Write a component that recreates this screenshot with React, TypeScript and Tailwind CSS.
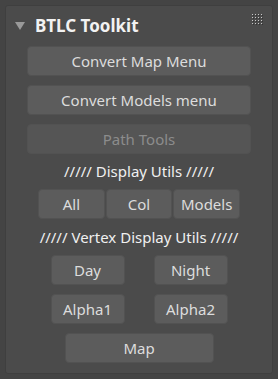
import React from "react";

const font = { fontFamily: '"Noto Sans", "Open Sans", sans-serif' };

function Btn({ children, className = "", disabled = false }: { children: React.ReactNode; className?: string; disabled?: boolean }) {
  return (
    <div
      className={`h-[30px] flex items-center justify-center rounded-[4px] bg-[#5c5c5c] border border-[#525252] text-[15px] leading-none ${disabled ? "text-[#8c8c8c] bg-[#555555]" : "text-[#dcdcdc]"} ${className}`}
    >
      {children}
    </div>
  );
}

function Grip() {
  const dots = [];
  for (let r = 0; r < 4; r++)
    for (let c = 0; c < 4; c++) {
      dots.push(<rect key={`s${r}${c}`} x={c * 3 + 1} y={r * 3 + 1} width={1} height={1} fill="#333" />);
      dots.push(<rect key={`d${r}${c}`} x={c * 3} y={r * 3} width={1} height={1} fill="#c8c8c8" />);
    }
  return (
    <svg width="11" height="11" viewBox="0 0 11 11">
      {dots}
    </svg>
  );
}

export default function App() {
  return (
    <div className="w-[278px] h-[379px] bg-[#444444] p-[5px]" style={font}>
      <div className="h-[369px] w-[268px] bg-[#4b4b4b] border border-[#3f3f3f] rounded-[3px] flex flex-col">
        <div className="h-[40px] flex items-center relative">
          <svg className="ml-[9px]" width="10" height="8" viewBox="0 0 10 8">
            <polygon points="0,0 10,0 5,8" fill="#9a9a9a" />
          </svg>
          <span className="ml-[10px] text-[17px] font-bold text-[#f2f2f2] leading-none mt-[-2px]">BTLC Toolkit</span>
          <div className="absolute right-[9px] top-[8px]">
            <Grip />
          </div>
        </div>
        <div className="flex flex-col items-center">
          <div className="w-[224px] flex flex-col gap-[9px]">
            <Btn>Convert Map Menu</Btn>
            <Btn>Convert Models menu</Btn>
            <Btn disabled>Path Tools</Btn>
          </div>
          <div className="h-[35px] flex items-center justify-center text-[15px] text-[#f0f0f0]">///// Display Utils /////</div>
          <div className="flex gap-[1px] w-[202px]">
            <Btn className="w-[67px]">All</Btn>
            <Btn className="w-[67px]">Col</Btn>
            <Btn className="w-[67px]">Models</Btn>
          </div>
          <div className="h-[36px] flex items-center justify-center text-[15px] text-[#f0f0f0]">///// Vertex Display Utils /////</div>
          <div className="flex flex-col gap-[9px] items-center">
            <div className="flex gap-[29px]">
              <Btn className="w-[74px]">Day</Btn>
              <Btn className="w-[74px]">Night</Btn>
            </div>
            <div className="flex gap-[29px]">
              <Btn className="w-[74px]">Alpha1</Btn>
              <Btn className="w-[74px]">Alpha2</Btn>
            </div>
            <Btn className="w-[149px]">Map</Btn>
          </div>
        </div>
      </div>
    </div>
  );
}
